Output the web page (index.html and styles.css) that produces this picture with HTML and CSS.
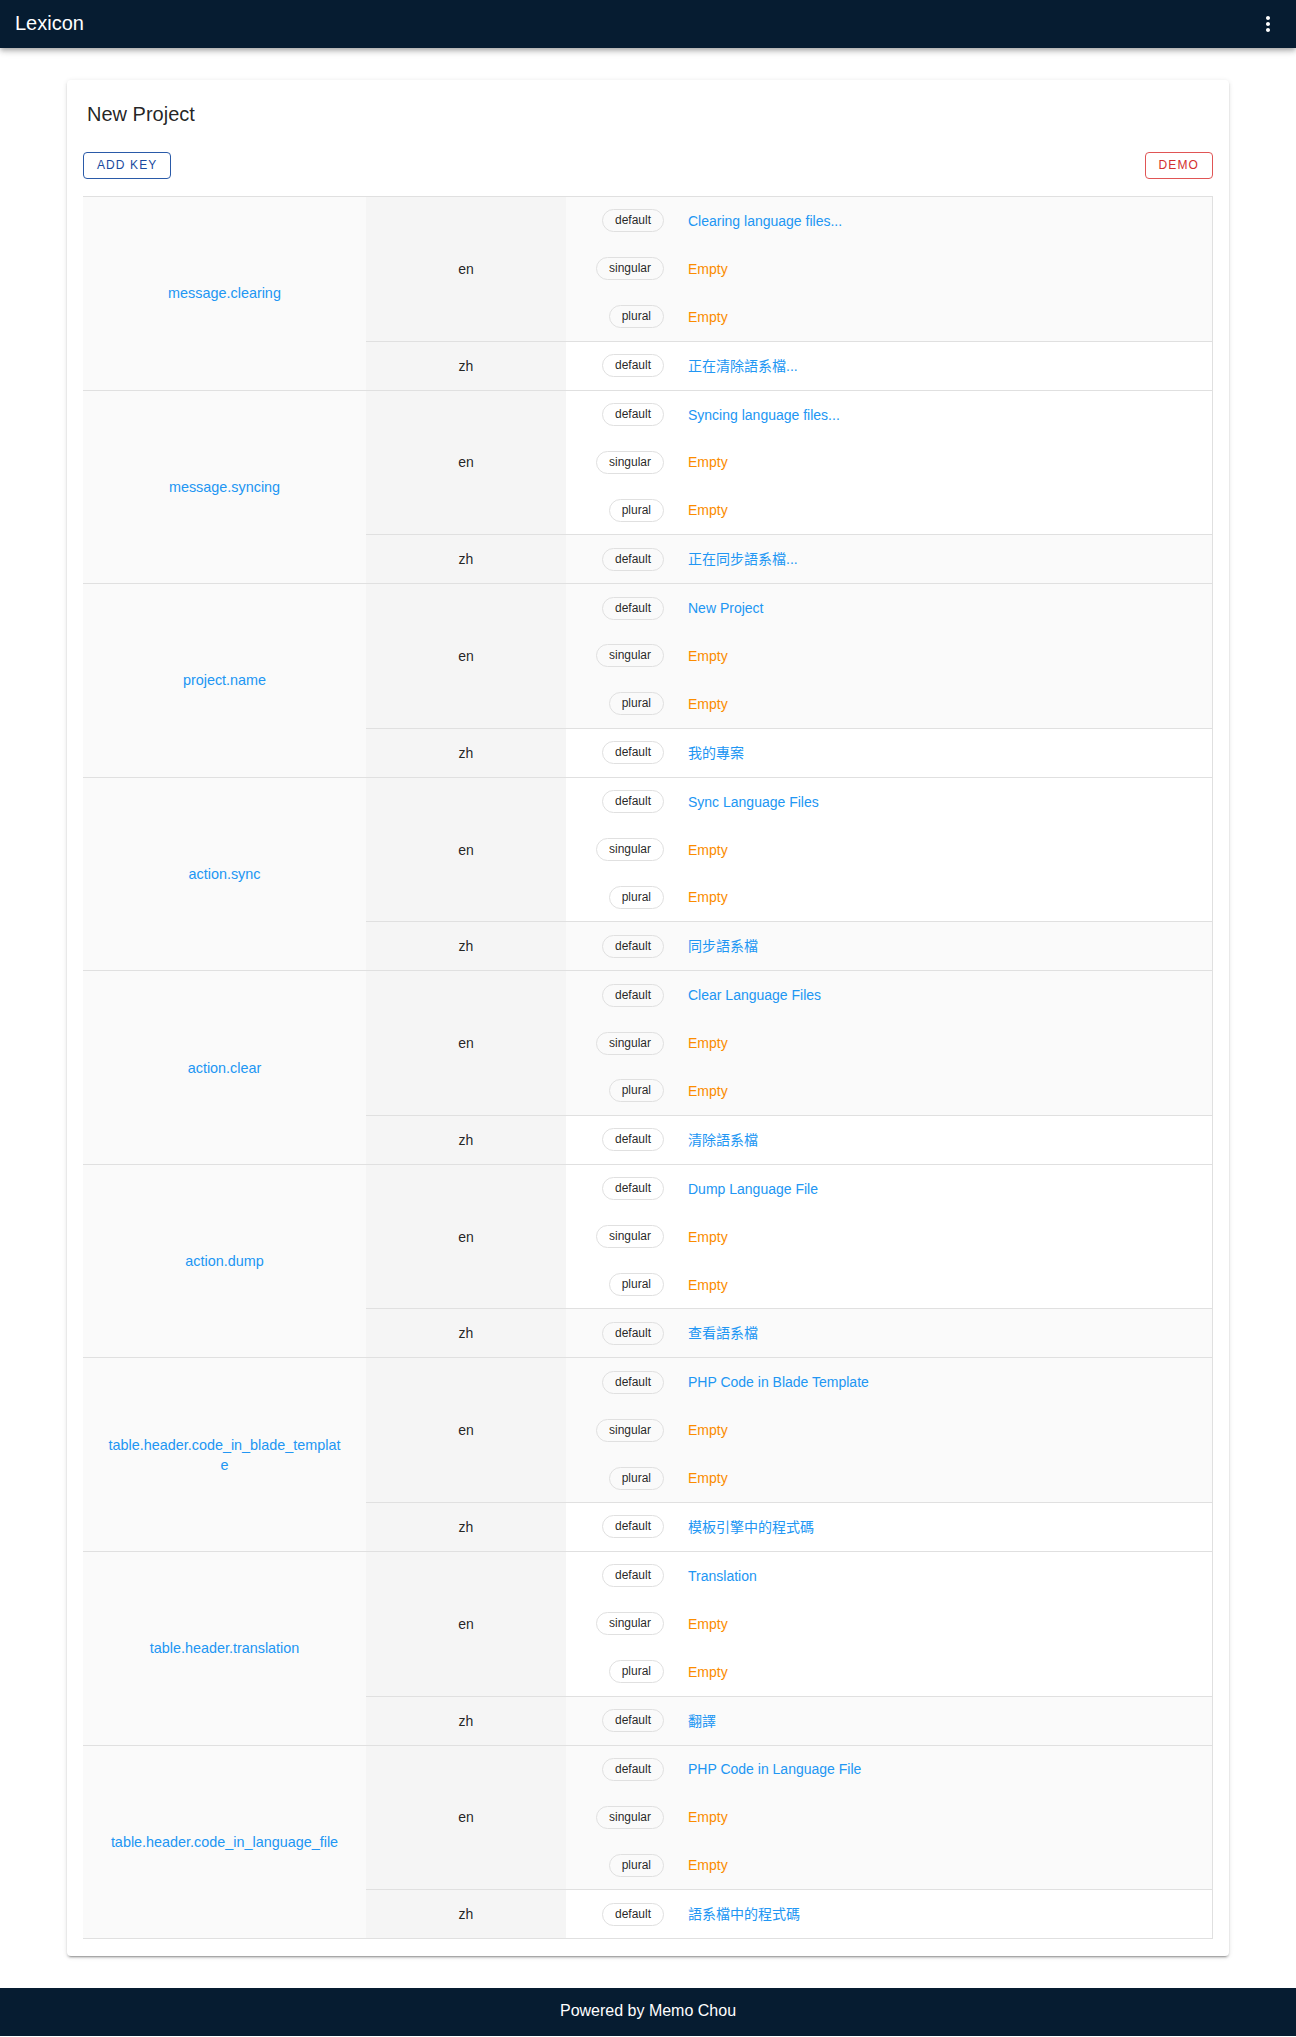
FILE: index.html
```html
<!DOCTYPE html>
<html lang="en">
<head>
<meta charset="utf-8">
<title>Lexicon</title>
<link rel="stylesheet" href="styles.css">
</head>
<body>
<header class="app-bar">
  <div class="app-title">Lexicon</div>
  <svg class="menu-icon" width="24" height="24" viewBox="0 0 24 24" aria-hidden="true"><path fill="#fff" d="M12 8c1.1 0 2-.9 2-2s-.9-2-2-2-2 .9-2 2 .9 2 2 2zm0 2c-1.1 0-2 .9-2 2s.9 2 2 2 2-.9 2-2-.9-2-2-2zm0 6c-1.1 0-2 .9-2 2s.9 2 2 2 2-.9 2-2-.9-2-2-2z"/></svg>
</header>

<main class="main">
  <section class="card">
    <h1 class="card-title">New Project</h1>
    <div class="toolbar">
      <button class="btn btn-primary">Add Key</button>
      <button class="btn btn-danger">Demo</button>
    </div>

    <div class="table">

      <div class="group">
        <div class="key">message.clearing</div>
        <div class="locales">
          <div class="lrow">
            <div class="locale">en</div>
            <div class="forms alt">
              <div class="form"><div class="pill-cell"><span class="pill">default</span></div><span class="val">Clearing language files...</span></div>
              <div class="form"><div class="pill-cell"><span class="pill">singular</span></div><span class="val empty">Empty</span></div>
              <div class="form"><div class="pill-cell"><span class="pill">plural</span></div><span class="val empty">Empty</span></div>
            </div>
          </div>
          <div class="lrow">
            <div class="locale">zh</div>
            <div class="forms">
              <div class="form"><div class="pill-cell"><span class="pill">default</span></div><span class="val">正在清除語系檔...</span></div>
            </div>
          </div>
        </div>
      </div>

      <div class="group">
        <div class="key">message.syncing</div>
        <div class="locales">
          <div class="lrow">
            <div class="locale">en</div>
            <div class="forms">
              <div class="form"><div class="pill-cell"><span class="pill">default</span></div><span class="val">Syncing language files...</span></div>
              <div class="form"><div class="pill-cell"><span class="pill">singular</span></div><span class="val empty">Empty</span></div>
              <div class="form"><div class="pill-cell"><span class="pill">plural</span></div><span class="val empty">Empty</span></div>
            </div>
          </div>
          <div class="lrow">
            <div class="locale">zh</div>
            <div class="forms alt">
              <div class="form"><div class="pill-cell"><span class="pill">default</span></div><span class="val">正在同步語系檔...</span></div>
            </div>
          </div>
        </div>
      </div>

      <div class="group">
        <div class="key">project.name</div>
        <div class="locales">
          <div class="lrow">
            <div class="locale">en</div>
            <div class="forms alt">
              <div class="form"><div class="pill-cell"><span class="pill">default</span></div><span class="val">New Project</span></div>
              <div class="form"><div class="pill-cell"><span class="pill">singular</span></div><span class="val empty">Empty</span></div>
              <div class="form"><div class="pill-cell"><span class="pill">plural</span></div><span class="val empty">Empty</span></div>
            </div>
          </div>
          <div class="lrow">
            <div class="locale">zh</div>
            <div class="forms">
              <div class="form"><div class="pill-cell"><span class="pill">default</span></div><span class="val">我的專案</span></div>
            </div>
          </div>
        </div>
      </div>

      <div class="group">
        <div class="key">action.sync</div>
        <div class="locales">
          <div class="lrow">
            <div class="locale">en</div>
            <div class="forms">
              <div class="form"><div class="pill-cell"><span class="pill">default</span></div><span class="val">Sync Language Files</span></div>
              <div class="form"><div class="pill-cell"><span class="pill">singular</span></div><span class="val empty">Empty</span></div>
              <div class="form"><div class="pill-cell"><span class="pill">plural</span></div><span class="val empty">Empty</span></div>
            </div>
          </div>
          <div class="lrow">
            <div class="locale">zh</div>
            <div class="forms alt">
              <div class="form"><div class="pill-cell"><span class="pill">default</span></div><span class="val">同步語系檔</span></div>
            </div>
          </div>
        </div>
      </div>

      <div class="group">
        <div class="key">action.clear</div>
        <div class="locales">
          <div class="lrow">
            <div class="locale">en</div>
            <div class="forms alt">
              <div class="form"><div class="pill-cell"><span class="pill">default</span></div><span class="val">Clear Language Files</span></div>
              <div class="form"><div class="pill-cell"><span class="pill">singular</span></div><span class="val empty">Empty</span></div>
              <div class="form"><div class="pill-cell"><span class="pill">plural</span></div><span class="val empty">Empty</span></div>
            </div>
          </div>
          <div class="lrow">
            <div class="locale">zh</div>
            <div class="forms">
              <div class="form"><div class="pill-cell"><span class="pill">default</span></div><span class="val">清除語系檔</span></div>
            </div>
          </div>
        </div>
      </div>

      <div class="group">
        <div class="key">action.dump</div>
        <div class="locales">
          <div class="lrow">
            <div class="locale">en</div>
            <div class="forms">
              <div class="form"><div class="pill-cell"><span class="pill">default</span></div><span class="val">Dump Language File</span></div>
              <div class="form"><div class="pill-cell"><span class="pill">singular</span></div><span class="val empty">Empty</span></div>
              <div class="form"><div class="pill-cell"><span class="pill">plural</span></div><span class="val empty">Empty</span></div>
            </div>
          </div>
          <div class="lrow">
            <div class="locale">zh</div>
            <div class="forms alt">
              <div class="form"><div class="pill-cell"><span class="pill">default</span></div><span class="val">查看語系檔</span></div>
            </div>
          </div>
        </div>
      </div>

      <div class="group">
        <div class="key">table.header.code_in_blade_template</div>
        <div class="locales">
          <div class="lrow">
            <div class="locale">en</div>
            <div class="forms alt">
              <div class="form"><div class="pill-cell"><span class="pill">default</span></div><span class="val">PHP Code in Blade Template</span></div>
              <div class="form"><div class="pill-cell"><span class="pill">singular</span></div><span class="val empty">Empty</span></div>
              <div class="form"><div class="pill-cell"><span class="pill">plural</span></div><span class="val empty">Empty</span></div>
            </div>
          </div>
          <div class="lrow">
            <div class="locale">zh</div>
            <div class="forms">
              <div class="form"><div class="pill-cell"><span class="pill">default</span></div><span class="val">模板引擎中的程式碼</span></div>
            </div>
          </div>
        </div>
      </div>

      <div class="group">
        <div class="key">table.header.translation</div>
        <div class="locales">
          <div class="lrow">
            <div class="locale">en</div>
            <div class="forms">
              <div class="form"><div class="pill-cell"><span class="pill">default</span></div><span class="val">Translation</span></div>
              <div class="form"><div class="pill-cell"><span class="pill">singular</span></div><span class="val empty">Empty</span></div>
              <div class="form"><div class="pill-cell"><span class="pill">plural</span></div><span class="val empty">Empty</span></div>
            </div>
          </div>
          <div class="lrow">
            <div class="locale">zh</div>
            <div class="forms alt">
              <div class="form"><div class="pill-cell"><span class="pill">default</span></div><span class="val">翻譯</span></div>
            </div>
          </div>
        </div>
      </div>

      <div class="group">
        <div class="key">table.header.code_in_language_file</div>
        <div class="locales">
          <div class="lrow">
            <div class="locale">en</div>
            <div class="forms alt">
              <div class="form"><div class="pill-cell"><span class="pill">default</span></div><span class="val">PHP Code in Language File</span></div>
              <div class="form"><div class="pill-cell"><span class="pill">singular</span></div><span class="val empty">Empty</span></div>
              <div class="form"><div class="pill-cell"><span class="pill">plural</span></div><span class="val empty">Empty</span></div>
            </div>
          </div>
          <div class="lrow">
            <div class="locale">zh</div>
            <div class="forms">
              <div class="form"><div class="pill-cell"><span class="pill">default</span></div><span class="val">語系檔中的程式碼</span></div>
            </div>
          </div>
        </div>
      </div>

    </div>
  </section>
</main>

<footer class="footer">Powered by Memo Chou</footer>
</body>
</html>
```

FILE: styles.css
```css
* {
  box-sizing: border-box;
}

html,
body {
  margin: 0;
  padding: 0;
}

body {
  font-family: "Liberation Sans", Arial, Helvetica, "Noto Sans CJK TC", sans-serif;
  color: rgba(0, 0, 0, 0.87);
  background: #ffffff;
}

.app-bar {
  position: relative;
  z-index: 2;
  height: 48px;
  padding: 0 16px 0 15px;
  display: flex;
  align-items: center;
  justify-content: space-between;
  background: #061c31;
  color: #ffffff;
  box-shadow: 0 2px 4px -1px rgba(0, 0, 0, 0.2), 0 4px 5px 0 rgba(0, 0, 0, 0.14), 0 1px 10px 0 rgba(0, 0, 0, 0.12);
}

.app-title {
  font-size: 20px;
  line-height: 46px;
  padding-bottom: 2px;
}

.menu-icon {
  display: block;
}

.main {
  padding: 32px 0;
}

.card {
  width: 1162px;
  margin: 0 auto;
  padding: 18px 16px 17px;
  background: #ffffff;
  border-radius: 4px;
  box-shadow: 0 3px 1px -2px rgba(0, 0, 0, 0.2), 0 2px 2px 0 rgba(0, 0, 0, 0.14), 0 1px 5px 0 rgba(0, 0, 0, 0.12);
}

.card-title {
  margin: 0 0 22px;
  padding-left: 4px;
  font-size: 20px;
  line-height: 32px;
  font-weight: 400;
  color: rgba(0, 0, 0, 0.87);
}

.toolbar {
  display: flex;
  justify-content: space-between;
  margin-bottom: 17px;
}

.btn {
  height: 27px;
  padding: 0 13px;
  border: 1px solid currentColor;
  border-radius: 4px;
  background: transparent;
  font-family: "Liberation Sans", Arial, Helvetica, sans-serif;
  font-size: 12px;
  line-height: 25px;
  letter-spacing: 1.1px;
  text-transform: uppercase;
}

.btn-primary {
  color: #1a4a9e;
  border-color: #2a5aa8;
}

.btn-danger {
  color: #d32f2f;
  border-color: #e05555;
}

.table {
  border-top: 1px solid #e0e0e0;
  border-right: 1px solid #e0e0e0;
  border-bottom: 1px solid #e0e0e0;
}

.group {
  display: flex;
}

.group + .group {
  border-top: 1px solid #e0e0e0;
}

.key {
  flex: 0 0 283px;
  display: flex;
  align-items: center;
  justify-content: center;
  padding: 0 23px;
  background: #fafafa;
  color: #2196f3;
  font-size: 14.4px;
  line-height: 20px;
  text-align: center;
  word-break: break-all;
}

.locales {
  flex: 1;
  display: flex;
  flex-direction: column;
}

.lrow {
  display: flex;
}

.lrow + .lrow {
  border-top: 1px solid #e0e0e0;
}

.locale {
  flex: 0 0 200px;
  display: flex;
  align-items: center;
  justify-content: center;
  background: #f5f5f5;
  font-size: 14px;
  color: rgba(0, 0, 0, 0.87);
}

.forms {
  flex: 1;
  background: #ffffff;
}

.forms.alt {
  background: #fafafa;
}

.form {
  height: 47.9px;
  display: flex;
  align-items: center;
  gap: 24px;
}

.pill-cell {
  flex: 0 0 98px;
  display: flex;
  justify-content: flex-end;
}

.pill {
  height: 23px;
  padding: 0 12px;
  border: 1px solid #e0e0e0;
  border-radius: 12px;
  font-size: 12px;
  line-height: 21px;
  color: rgba(0, 0, 0, 0.87);
  white-space: nowrap;
}

.val {
  font-size: 14px;
  line-height: 20px;
  color: #2196f3;
}

.val.empty {
  color: #fb8c00;
}

.footer {
  height: 48px;
  padding-bottom: 3px;
  display: flex;
  align-items: center;
  justify-content: center;
  background: #061c31;
  color: #ffffff;
  font-size: 16px;
}
```
